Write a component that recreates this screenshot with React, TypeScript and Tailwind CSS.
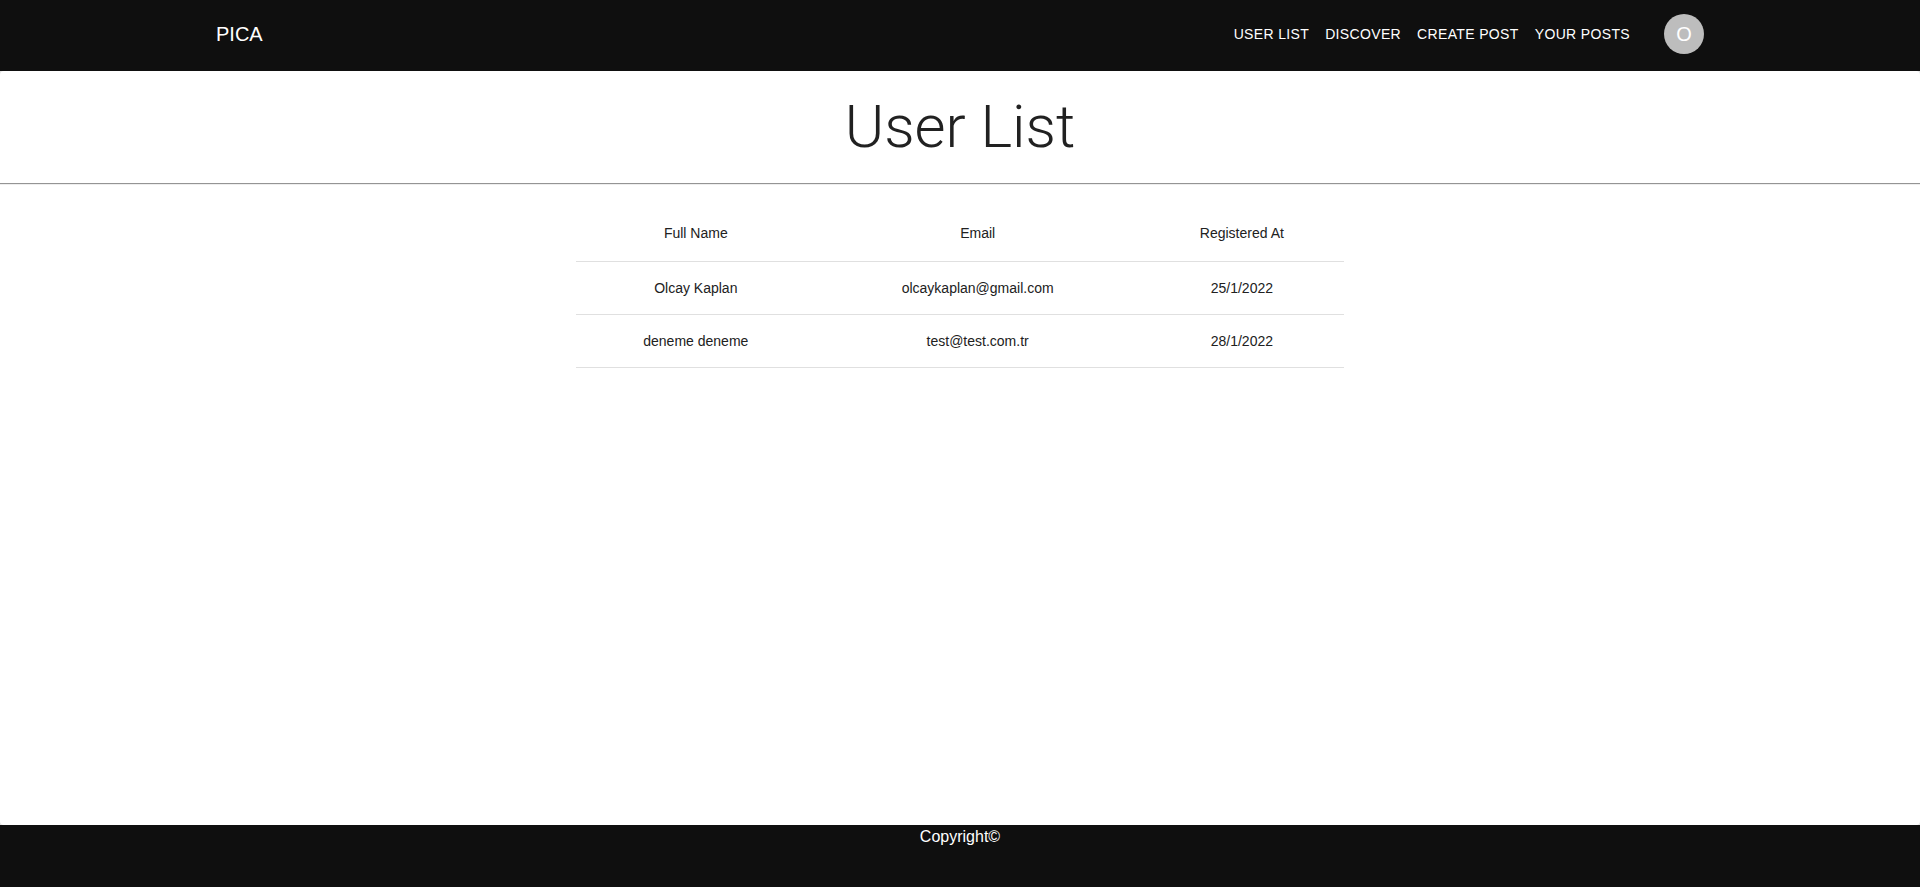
const links = [
  { label: 'User List', href: '#users' },
  { label: 'Discover', href: '#discover' },
  { label: 'Create Post', href: '#create' },
  { label: 'Your Posts', href: '#posts' },
];

const users = [
  { name: 'Olcay Kaplan', email: 'olcaykaplan@gmail.com', registered: '25/1/2022' },
  { name: 'deneme deneme', email: 'test@test.com.tr', registered: '28/1/2022' },
];

function Header() {
  return (
    <header className="bg-[#0f0f0f] pb-[3px] text-white">
      <div className="mx-auto flex h-[68px] max-w-[1536px] items-center px-6">
        <a href="#home" className="text-xl leading-8">
          PICA
        </a>
        <nav className="ml-auto flex gap-4">
          {links.map((link) => (
            <a key={link.href} href={link.href} className="text-sm leading-6 tracking-wide uppercase">
              {link.label}
            </a>
          ))}
        </nav>
        <button
          type="button"
          aria-label="Account"
          className="ml-[34px] flex size-10 items-center justify-center rounded-full bg-[#bdbdbd] text-xl leading-5"
        >
          O
        </button>
      </div>
    </header>
  );
}

function UserTable() {
  return (
    <table className="mx-auto mt-5 w-2/5 table-fixed border-separate border-spacing-0 text-center text-sm">
      <colgroup>
        <col className="w-[31.2%]" />
        <col className="w-[42.2%]" />
        <col className="w-[26.6%]" />
      </colgroup>
      <thead>
        <tr>
          {['Full Name', 'Email', 'Registered At'].map((title) => (
            <th key={title} scope="col" className="border-b border-[#e0e0e0] p-4 leading-6 font-normal">
              {title}
            </th>
          ))}
        </tr>
      </thead>
      <tbody>
        {users.map((user) => (
          <tr key={user.email}>
            <td className="border-b border-[#e0e0e0] p-4 leading-5">{user.name}</td>
            <td className="border-b border-[#e0e0e0] p-4 leading-5">{user.email}</td>
            <td className="border-b border-[#e0e0e0] p-4 leading-5">{user.registered}</td>
          </tr>
        ))}
      </tbody>
    </table>
  );
}

export default function App() {
  return (
    <div className="flex min-h-screen flex-col bg-[#e4e4e4] font-['Liberation_Sans',Arial,sans-serif] text-[#212121]">
      <Header />
      <main className="grow rounded bg-white">
        <h1 className="py-5 text-center font-['Roboto','Liberation_Sans',sans-serif] text-6xl leading-[72px] font-light">
          User List
        </h1>
        <hr className="border-t border-b border-t-[#949494] border-b-[#eeeeee]" />
        <UserTable />
      </main>
      <footer className="h-[62px] bg-[#0f0f0f] text-center text-base leading-6 text-white">Copyright©</footer>
    </div>
  );
}
